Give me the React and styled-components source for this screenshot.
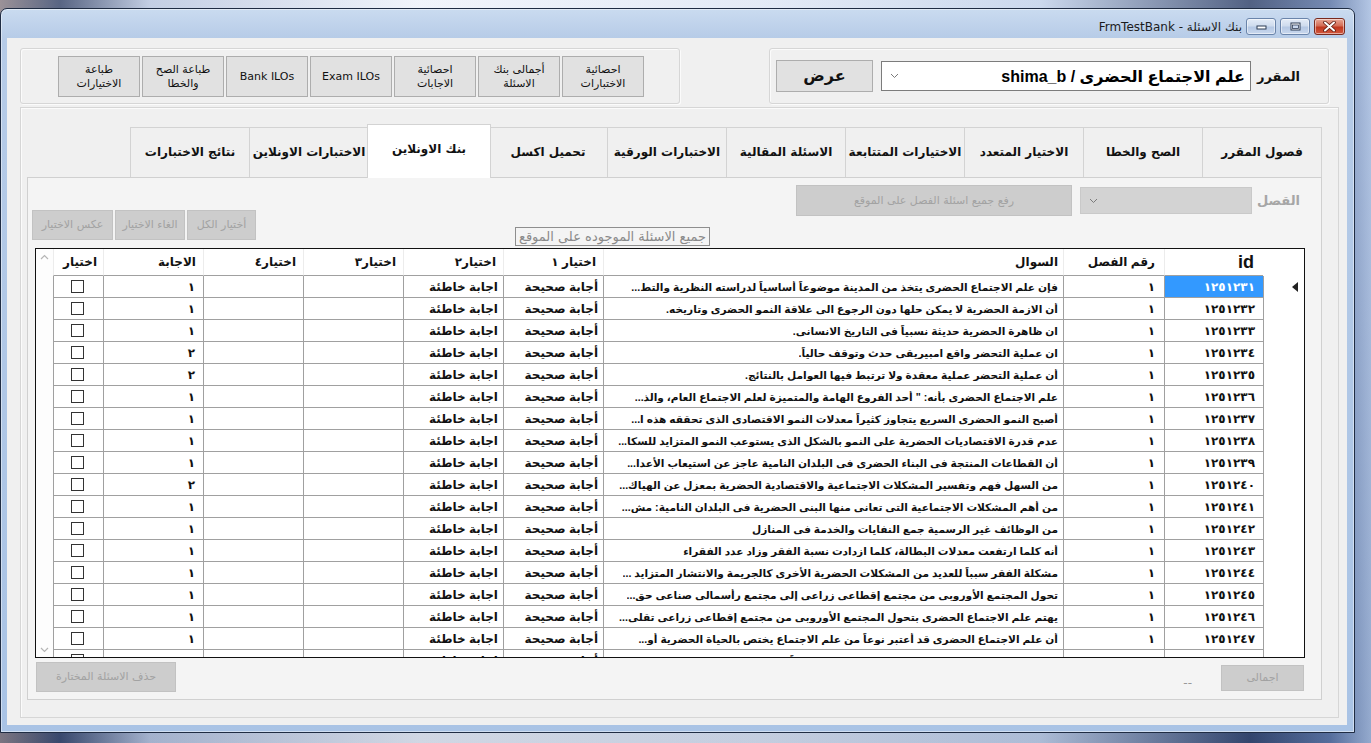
import React from "react"
import styled, { createGlobalStyle } from "styled-components"

const GlobalStyle = createGlobalStyle`
  html, body {
    margin: 0;
    padding: 0;
  }
  body {
    width: 1371px;
    height: 743px;
    overflow: hidden;
    font-family: "DejaVu Sans", sans-serif;
  }
  * {
    box-sizing: border-box;
  }
`

const UI_FONT = `"DejaVu Sans", sans-serif`
const GRID_FONT = `"Liberation Sans", "DejaVu Sans", sans-serif`

const Desktop = styled.div`
  width: 1371px;
  height: 743px;
  padding: 8px 16px 10px 0;
  background:
    linear-gradient(180deg, rgba(255, 255, 255, 0.15), rgba(40, 60, 100, 0.15)),
    linear-gradient(
      90deg,
      #8a7f86 0,
      #3b4a6e 60px,
      #b9c6df 150px,
      #eef2fa 420px,
      #dfe7f5 760px,
      #c3d2ea 1040px,
      #34466e 1250px,
      #5d76a6 1330px,
      #a7bde0 1371px
    );
`

const Window = styled.div`
  width: 1355px;
  height: 725px;
  border: 1px solid #1f2c43;
  border-radius: 7px 7px 0 0;
  background: linear-gradient(180deg, #cadbf0 0, #b6cbe7 30px, #a9c3e5 100%);
  box-shadow: inset 0 0 0 1px rgba(255, 255, 255, 0.45);
  display: flex;
  flex-direction: column;
  padding: 0 7px 7px 6px;
`

const TitleBar = styled.div`
  height: 29px;
  flex-shrink: 0;
  direction: rtl;
  display: flex;
  align-items: center;
  gap: 4px;
  padding: 9px 2px 3px 0;
`

const Caption = styled.span`
  font-family: ${UI_FONT};
  font-size: 12px;
  color: #1b1b1b;
  white-space: nowrap;
`

const CaptionButton = styled.div`
  width: ${p => (p.$close ? 31 : 30)}px;
  height: 17px;
  border: 1px solid ${p => (p.$close ? "#7a2a1e" : "#6a84aa")};
  border-radius: 3px;
  display: flex;
  align-items: center;
  justify-content: center;
  background: ${p =>
    p.$close
      ? "linear-gradient(180deg, #e9a897 0, #d46e57 45%, #c0381f 55%, #d2573d 100%)"
      : "linear-gradient(180deg, #e4ecf7 0, #cfdcee 45%, #b5c8e4 55%, #c9d8ee 100%)"};
  box-shadow: inset 0 0 0 1px rgba(255, 255, 255, 0.5);
`

const Client = styled.div`
  flex: 1;
  background: #f0f0f0;
  direction: rtl;
  display: flex;
  flex-direction: column;
`

const TopRow = styled.div`
  height: 69px;
  flex-shrink: 0;
  display: flex;
  justify-content: space-between;
  align-items: flex-start;
  padding: 10px 18px 0 13px;
`

const GroupBox = styled.div`
  height: 56px;
  width: ${p => p.$width}px;
  border: 1px solid #d6d6d6;
  border-radius: 3px;
  box-shadow: inset 1px 1px 0 #fbfbfb, 1px 1px 0 #fbfbfb;
  display: flex;
`

const CourseGroup = styled(GroupBox)`
  align-items: center;
  padding-right: 28px;
`

const ToolGroup = styled(GroupBox)`
  align-items: flex-start;
  gap: 2px;
  padding: 7px 35px 0 0;
`

const FieldLabel = styled.span`
  width: 36px;
  margin-left: ${p => p.$gap}px;
  font-family: ${UI_FONT};
  font-weight: bold;
  font-size: ${p => p.$size || 13}px;
  color: ${p => (p.$disabled ? "#a6a6a6" : "#111")};
  white-space: nowrap;
`

const Combo = styled.div`
  width: ${p => p.$width}px;
  height: ${p => p.$height}px;
  border: 1px solid ${p => (p.$disabled ? "#c9c9c9" : "#7c7c7c")};
  background: ${p => (p.$disabled ? "#d3d3d3" : "#fff")};
  display: flex;
  align-items: center;
  padding: 0 5px 0 8px;
`

const ComboText = styled.span`
  flex: 1;
  font-family: ${GRID_FONT};
  font-weight: bold;
  font-size: 16px;
  color: #000;
  white-space: nowrap;
`

const Chevron = styled.svg`
  width: 9px;
  height: 6px;
  margin-right: auto;
  flex-shrink: 0;
`

const Button = styled.div`
  width: ${p => p.$width}px;
  height: ${p => p.$height}px;
  flex-shrink: 0;
  border: 1px solid ${p => (p.$disabled ? "#c2c2c2" : "#adadad")};
  background: ${p => (p.$disabled ? "#cdcdcd" : "#e1e1e1")};
  color: ${p => (p.$disabled ? "#a2a2a2" : "#111")};
  font-family: ${UI_FONT};
  font-size: ${p => p.$size || 11}px;
  font-weight: ${p => (p.$bold ? "bold" : "normal")};
  line-height: 1.25;
  text-align: center;
  white-space: pre-line;
  display: flex;
  align-items: center;
  justify-content: center;
`

const MainFrame = styled.div`
  height: 611px;
  margin: 0 8px 0 13px;
  border: 1px solid #d6d6d6;
  box-shadow: inset 1px 1px 0 #fbfbfb;
  padding: 16px 16px 17px 6px;
`

const TabControl = styled.div`
  height: 100%;
  display: flex;
  flex-direction: column;
`

const TabStrip = styled.div`
  height: 53px;
  flex-shrink: 0;
  display: flex;
  align-items: flex-end;
`

const Tab = styled.div`
  position: relative;
  width: ${p => (p.$active ? 124 : 120)}px;
  height: ${p => (p.$active ? 54 : 50)}px;
  margin: 0 -2px -${p => (p.$active ? 1 : 0)}px ${p => (p.$active ? -2 : -1)}px;
  margin-right: ${p => (p.$active ? -2 : 0)}px;
  z-index: ${p => (p.$active ? 2 : 1)};
  border: 1px solid #d3d3d3;
  border-bottom: none;
  background: ${p => (p.$active ? "#fff" : "#f0f0f0")};
  font-family: ${UI_FONT};
  font-weight: bold;
  font-size: 12px;
  color: #111;
  display: flex;
  align-items: center;
  justify-content: center;
  padding-bottom: ${p => (p.$active ? 5 : 1)}px;
  white-space: nowrap;
`

const TabPage = styled.div`
  flex: 1;
  border: 1px solid #d0d0d0;
  background: #f4f4f4;
  display: flex;
  flex-direction: column;
  padding: 7px 16px 0 7px;
`

const FilterRow = styled.div`
  height: 31px;
  flex-shrink: 0;
  display: flex;
  align-items: center;
  padding-right: 5px;
`

const SelectRow = styled.div`
  height: 38px;
  flex-shrink: 0;
  margin-top: -6px;
  display: flex;
  align-items: flex-start;
`

const CaptionBox = styled.div`
  margin: 17px 595px 0 0;
  height: 19px;
  padding: 0 3px;
  border: 1px solid #8e8e8e;
  font-family: ${UI_FONT};
  font-size: 13px;
  line-height: 17px;
  color: #8a8a8a;
  white-space: nowrap;
`

const ButtonGroup = styled.div`
  margin-right: auto;
  margin-left: -3px;
  display: flex;
  gap: 2px;
`

const Grid = styled.div`
  height: 410px;
  flex-shrink: 0;
  border: 1px solid #111;
  background: #fff;
  display: flex;
  overflow: hidden;
`

const GridBody = styled.div`
  width: 1251px;
  flex-shrink: 0;
  display: flex;
  flex-direction: column;
`

const COLUMNS = "41px 99px 101px 460px 100px 100px 100px 100px 100px 50px"

const GridRow = styled.div`
  display: grid;
  grid-template-columns: ${COLUMNS};
  height: ${p => (p.$head ? 27 : 22)}px;
  flex-shrink: 0;
`

const HeadCell = styled.div`
  border-left: 1px solid ${p => (p.$blank ? "transparent" : "#ececec")};
  border-bottom: 1px solid ${p => (p.$blank ? "transparent" : "#a0a0a0")};
  padding: 0 ${p => p.$pad || 7}px 0 4px;
  display: flex;
  align-items: center;
  font-family: ${GRID_FONT};
  font-weight: bold;
  font-size: ${p => (p.$latin ? 18 : 12)}px;
  color: #111;
  white-space: nowrap;
`

const Cell = styled.div`
  min-width: 0;
  border-left: 1px solid #a0a0a0;
  border-bottom: 1px solid #a0a0a0;
  padding: 0 ${p => p.$pad || 5}px 0 3px;
  display: flex;
  align-items: center;
  justify-content: ${p => (p.$center ? "center" : "flex-start")};
  overflow: hidden;
  font-family: ${GRID_FONT};
  font-weight: bold;
  font-size: 12px;
  letter-spacing: ${p => (p.$digits ? "3px" : "0")};
  white-space: nowrap;
  background: ${p => (p.$selected ? "#3399ff" : "#fff")};
  color: ${p => (p.$selected ? "#fff" : "#111")};
`

const QuestionText = styled.span`
  min-width: 0;
  overflow: hidden;
  text-overflow: clip;
  font-size: 10.6px;
`

const RowHeader = styled.div`
  border-left: 1px solid #a0a0a0;
  display: flex;
  align-items: center;
  justify-content: flex-start;
  padding-right: 6px;
`

const CheckBox = styled.div`
  width: 13px;
  height: 13px;
  border: 1px solid #333;
  background: #fff;
`

const ScrollBar = styled.div`
  flex: 1;
  background: #fdfdfd;
  display: flex;
  flex-direction: column;
  justify-content: space-between;
  align-items: center;
  padding: 5px 0 4px;
`

const BottomRow = styled.div`
  flex: 1;
  display: flex;
  align-items: flex-start;
  padding-top: 4px;
`

const TotalLabel = styled.span`
  margin: 14px 29px 0 0;
  font-family: ${UI_FONT};
  font-size: 12px;
  color: #999;
`

const arabicDigits = n => String(n).replace(/\d/g, d => "٠١٢٣٤٥٦٧٨٩"[d])

const toolButtons = [
  "احصائية\nالاختبارات",
  "أجمالى بنك\nالاسئلة",
  "احصائية\nالاجابات",
  "Exam ILOs",
  "Bank ILOs",
  "طباعة الصح\nوالخطا",
  "طباعة\nالاختيارات",
]

const tabs = [
  "فصول المقرر",
  "الصح والخطا",
  "الاختيار المتعدد",
  "الاختيارات المتتابعة",
  "الاسئلة المقالية",
  "الاختبارات الورقية",
  "تحميل اكسل",
  "بنك الاونلاين",
  "الاختبارات الاونلاين",
  "نتائج الاختبارات",
]

const questions = [
  "فإن علم الاجتماع الحضرى يتخذ من المدينة موضوعاً أساسياً لدراسته النظرية والتط...",
  "أن الازمة الحضرية لا يمكن حلها دون الرجوع الي علاقة النمو الحضري وتاريخه.",
  "ان ظاهرة الحضرية حديثة نسبياً في التاريخ الانساني.",
  "ان  عملية التحضر  واقع امبيريقي حدث وتوقف حالياً.",
  "أن عملية التحضر عملية معقدة ولا ترتبط  فيها العوامل بالنتائج.",
  "علم الاجتماع الحضري بأنه: \" أحد الفروع الهامة والمتميزة لعلم الاجتماع العام، والذ...",
  "أصبح النمو الحضري السريع يتجاوز كثيراً معدلات النمو الاقتصادي الذي تحققه هذه ا...",
  "عدم قدرة الاقتصاديات الحضرية على النمو بالشكل الذي يستوعب النمو المتزايد للسكا...",
  "أن القطاعات المنتجة في البناء الحضري في البلدان النامية عاجز عن استيعاب الأعدا...",
  "من السهل فهم وتفسير المشكلات الاجتماعية والاقتصادية الحضرية بمعزل عن الهياك...",
  "من أهم المشكلات الاجتماعية التي تعاني منها البنى الحضرية في البلدان النامية: مش...",
  "من الوظائف غير الرسمية جمع النفايات والخدمة في المنازل",
  "أنه كلما ارتفعت معدلات البطالة، كلما ازدادت نسبة الفقر وزاد عدد الفقراء",
  "مشكلة الفقر سبباً للعديد من المشكلات الحضرية الأخرى كالجريمة والانتشار المتزايد ...",
  "تحول المجتمع الأوروبي من مجتمع إقطاعي زراعي إلى مجتمع رأسمالي صناعي حق...",
  "يهتم علم الاجتماع الحضري بتحول المجتمع الأوروبى من مجتمع إقطاعى زراعى تقلي...",
  "أن علم الاجتماع الحضرى قد أعتبر نوعاً من علم الاجتماع يختص بالحياة الحضرية أو...",
  "ويعتبر علم الاجتماع الحضري من العلوم الحديثة نسبياً...",
]

const answers = [1, 1, 1, 2, 2, 1, 1, 1, 1, 2, 1, 1, 1, 1, 1, 1, 1, 1]

const rows = questions.map((q, i) => ({
  id: 1251231 + i,
  chapter: 1,
  question: q,
  answer: answers[i],
}))

const DownChevron = () => (
  <Chevron viewBox="0 0 9 6">
    <path d="M1 1 L4.5 4.5 L8 1" fill="none" stroke="#7a7a7a" strokeWidth="1" />
  </Chevron>
)

const ScrollArrow = ({ up }) => (
  <svg width="9" height="6" viewBox="0 0 9 6">
    <path
      d={up ? "M1 5 L4.5 1.5 L8 5" : "M1 1 L4.5 4.5 L8 1"}
      fill="none"
      stroke="#b5b5b5"
      strokeWidth="1.2"
    />
  </svg>
)

const App = () => {
  return (
    <>
      <GlobalStyle />
      <Desktop>
        <Window>
          <TitleBar>
            <CaptionButton $close>
              <svg width="13" height="11" viewBox="0 0 13 11">
                <path
                  d="M2 1.5 L11 9.5 M11 1.5 L2 9.5"
                  stroke="#5a1a10"
                  strokeWidth="3.6"
                  strokeLinecap="round"
                />
                <path
                  d="M2 1.5 L11 9.5 M11 1.5 L2 9.5"
                  stroke="#fff"
                  strokeWidth="2"
                  strokeLinecap="round"
                />
              </svg>
            </CaptionButton>
            <CaptionButton>
              <svg width="11" height="9" viewBox="0 0 11 9">
                <rect x="1" y="1" width="9" height="7" fill="#fff" stroke="#2d3c55" />
                <rect x="2.5" y="3" width="6" height="3.5" fill="#c9d8ee" stroke="#2d3c55" strokeWidth="0.8" />
              </svg>
            </CaptionButton>
            <CaptionButton>
              <svg width="11" height="6" viewBox="0 0 11 6">
                <rect x="1" y="2" width="9" height="3" fill="#fff" stroke="#2d3c55" />
              </svg>
            </CaptionButton>
            <Caption>بنك الاسئلة - FrmTestBank</Caption>
          </TitleBar>

          <Client>
            <TopRow>
              <CourseGroup $width={560}>
                <FieldLabel $gap={13}>المقرر</FieldLabel>
                <Combo $width={370} $height={30}>
                  <ComboText>علم الاجتماع الحضرى / shima_b</ComboText>
                  <DownChevron />
                </Combo>
                <Button $width={97} $height={32} $bold $size={16} style={{ marginRight: 8 }}>
                  عرض
                </Button>
              </CourseGroup>

              <ToolGroup $width={660}>
                {toolButtons.map(label => (
                  <Button key={label} $width={82} $height={41}>
                    {label}
                  </Button>
                ))}
              </ToolGroup>
            </TopRow>

            <MainFrame>
              <TabControl>
                <TabStrip>
                  {tabs.map(t => (
                    <Tab key={t} $active={t === "بنك الاونلاين"}>
                      {t}
                    </Tab>
                  ))}
                </TabStrip>

                <TabPage>
                  <FilterRow>
                    <FieldLabel $gap={12} $disabled>
                      القصل
                    </FieldLabel>
                    <Combo $width={172} $height={27} $disabled>
                      <DownChevron />
                    </Combo>
                    <Button $width={276} $height={31} $disabled style={{ marginRight: 8 }}>
                      رفع جميع اسئلة الفصل على الموقع
                    </Button>
                  </FilterRow>

                  <SelectRow>
                    <CaptionBox>جميع الاسئلة الموجوده على الموقع</CaptionBox>
                    <ButtonGroup>
                      <Button $width={69} $height={30} $disabled>
                        أختيار الكل
                      </Button>
                      <Button $width={70} $height={30} $disabled>
                        الغاء الاختيار
                      </Button>
                      <Button $width={81} $height={30} $disabled>
                        عكس الاختيار
                      </Button>
                    </ButtonGroup>
                  </SelectRow>

                  <Grid>
                    <GridBody>
                      <GridRow $head>
                        <HeadCell $blank />
                        <HeadCell $latin $pad={9}>id</HeadCell>
                        <HeadCell $pad={9}>رقم الفصل</HeadCell>
                        <HeadCell $pad={5}>السوال</HeadCell>
                        <HeadCell>اختيار ١</HeadCell>
                        <HeadCell>اختيار٢</HeadCell>
                        <HeadCell>اختيار٣</HeadCell>
                        <HeadCell>اختيار٤</HeadCell>
                        <HeadCell>الاجابة</HeadCell>
                        <HeadCell $pad={6}>اختيار</HeadCell>
                      </GridRow>

                      {rows.map((r, i) => (
                        <GridRow key={r.id}>
                          <RowHeader>
                            {i === 0 && (
                              <svg width="6" height="10" viewBox="0 0 6 10">
                                <path d="M0 5 L6 0 L6 10 Z" fill="#222" />
                              </svg>
                            )}
                          </RowHeader>
                          <Cell $digits $pad={8} $selected={i === 0}>
                            {arabicDigits(r.id)}
                          </Cell>
                          <Cell $pad={9}>{arabicDigits(r.chapter)}</Cell>
                          <Cell>
                            <QuestionText>{r.question}</QuestionText>
                          </Cell>
                          <Cell>أجابة صحيحة</Cell>
                          <Cell>اجابة خاطئة</Cell>
                          <Cell />
                          <Cell />
                          <Cell $pad={8}>{arabicDigits(r.answer)}</Cell>
                          <Cell $center>
                            <CheckBox />
                          </Cell>
                        </GridRow>
                      ))}
                    </GridBody>
                    <ScrollBar>
                      <ScrollArrow up />
                      <ScrollArrow />
                    </ScrollBar>
                  </Grid>

                  <BottomRow>
                    <Button $width={83} $height={26} $disabled style={{ marginTop: 3, marginRight: 1 }}>
                      اجمالى
                    </Button>
                    <TotalLabel>--</TotalLabel>
                    <Button
                      $width={140}
                      $height={30}
                      $disabled
                      style={{ marginRight: "auto", marginLeft: 1 }}
                    >
                      حذف الاسئلة المختارة
                    </Button>
                  </BottomRow>
                </TabPage>
              </TabControl>
            </MainFrame>
          </Client>
        </Window>
      </Desktop>
    </>
  )
}

export default App
